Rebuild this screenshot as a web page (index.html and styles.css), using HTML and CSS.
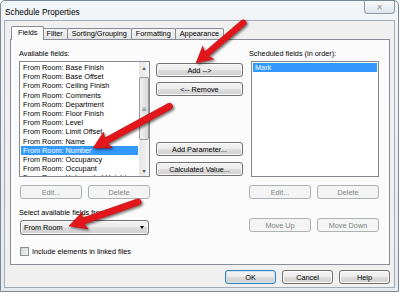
FILE: index.html
```html
<!DOCTYPE html>
<html>
<head>
<meta charset="utf-8">
<title>Schedule Properties</title>
<link rel="stylesheet" href="styles.css">
</head>
<body>
<div class="window">
  <div class="titlebar">
    <span class="title">Schedule Properties</span>
    <div class="close">&#x2715;</div>
  </div>
  <div class="client">
    <div class="tabs">
      <div class="tab active">Fields</div>
      <div class="tab">Filter</div>
      <div class="tab">Sorting/Grouping</div>
      <div class="tab">Formatting</div>
      <div class="tab">Appearance</div>
    </div>
    <div class="panel">
      <!-- left: available fields -->
      <div class="col left">
        <div class="label">Available fields:</div>
        <div class="list">
          <div class="items">
            <div class="item">From Room: Base Finish</div>
            <div class="item">From Room: Base Offset</div>
            <div class="item">From Room: Ceiling Finish</div>
            <div class="item">From Room: Comments</div>
            <div class="item">From Room: Department</div>
            <div class="item">From Room: Floor Finish</div>
            <div class="item">From Room: Level</div>
            <div class="item">From Room: Limit Offset</div>
            <div class="item">From Room: Name</div>
            <div class="item sel">From Room: Number</div>
            <div class="item">From Room: Occupancy</div>
            <div class="item">From Room: Occupant</div>
            <div class="item">From Room: Unbounded Height</div>
          </div>
          <div class="scroll">
            <div class="sb-btn">&#x25B4;</div>
            <div class="thumb">&#x2261;</div>
            <div class="sb-space"></div>
            <div class="sb-btn">&#x25BE;</div>
          </div>
        </div>
        <div class="btnrow">
          <div class="btn off">Edit...</div>
          <div class="btn off">Delete</div>
        </div>
        <div class="label sub">Select available fields from:</div>
        <div class="select">From Room<span class="caret"></span></div>
        <div class="check"><span class="box"></span>Include elements in linked files</div>
      </div>

      <!-- middle: move buttons -->
      <div class="col mid">
        <div class="btn">Add --&gt;</div>
        <div class="btn remove">&lt;-- Remove</div>
        <div class="btn param">Add Parameter...</div>
        <div class="btn calc">Calculated Value...</div>
      </div>

      <!-- right: scheduled fields -->
      <div class="col right">
        <div class="label">Scheduled fields (in order):</div>
        <div class="list wide">
          <div class="items">
            <div class="item sel">Mark</div>
          </div>
        </div>
        <div class="btnrow">
          <div class="btn off">Edit...</div>
          <div class="btn off">Delete</div>
        </div>
        <div class="btnrow moves">
          <div class="btn off">Move Up</div>
          <div class="btn off">Move Down</div>
        </div>
      </div>
    </div>
    <div class="footer">
      <div class="btn default">OK</div>
      <div class="btn">Cancel</div>
      <div class="btn">Help</div>
    </div>
  </div>
</div>

<svg class="arrows" width="400" height="296" viewBox="0 0 400 296">
  <defs>
    <filter id="shadow" x="-20%" y="-20%" width="140%" height="140%">
      <feDropShadow dx="1.5" dy="1.5" stdDeviation="1" flood-color="#000" flood-opacity="0.55"/>
    </filter>
  </defs>
  <g class="arrow" filter="url(#shadow)">
    <path transform="translate(196 63) rotate(139.6)" d="M0 0 L-16 -8.5 L-14 -3 L-62 -3 A3 3 0 0 0 -62 3 L-14 3 L-16 8.5 Z"/>
    <path transform="translate(93 148) rotate(151.4)" d="M0 0 L-17 -9 L-15 -3.2 L-87 -3.2 A3.2 3.2 0 0 0 -87 3.2 L-15 3.2 L-17 9 Z"/>
    <path transform="translate(69 226) rotate(160.8)" d="M0 0 L-17 -9 L-15 -3.2 L-73 -3.2 A3.2 3.2 0 0 0 -73 3.2 L-15 3.2 L-17 9 Z"/>
  </g>
</svg>
</body>
</html>
```

FILE: styles.css
```css
body {
  margin: 0;
  background: #fff;
  font-family: "Liberation Sans", Arial, sans-serif;
  font-size: 7.3px;
  color: #000;
}

/* window frame */
.window {
  width: 399px;
  height: 292px;
  box-sizing: border-box;
  border: 1px solid #7a8896;
  border-radius: 5px 5px 0 0;
  background: linear-gradient(#f2f5f8, #e5eaef);
  display: flex;
  flex-direction: column;
}

.titlebar {
  height: 19px;
  display: flex;
  justify-content: space-between;
  align-items: flex-start;
}

.title {
  font-size: 8.3px;
  padding: 6px 0 0 4px;
}

.close {
  width: 31px;
  height: 13px;
  margin-right: 3px;
  box-sizing: border-box;
  border: 1px solid #8c99a6;
  border-top: none;
  border-radius: 0 0 4px 4px;
  background: linear-gradient(#f6f8fa, #e1e6ec);
  color: #8e99a4;
  font-family: "DejaVu Sans", sans-serif;
  font-size: 8px;
  display: flex;
  align-items: center;
  justify-content: center;
}

.client {
  flex: 1;
  margin: 0 3px 3px 3px;
  border: 1px solid #a3acb5;
  background: #f0f0f0;
  display: flex;
  flex-direction: column;
}

/* tabs */
.tabs {
  display: flex;
  align-items: flex-end;
  height: 13px;
  padding: 5px 0 0 7px;
}

.tab {
  height: 11px;
  box-sizing: border-box;
  border: 1px solid #898c95;
  border-bottom: none;
  border-radius: 2px 2px 0 0;
  background: linear-gradient(#f4f4f4, #e3e3e3);
  padding: 0 4px;
  line-height: 10px;
  margin-left: -1px;
  white-space: nowrap;
}

.tab.active {
  height: 14px;
  background: #fcfcfc;
  padding: 1px 6px 0;
  margin: 0 -2px -1px -1px;
  position: relative;
  z-index: 1;
}

.panel {
  margin: 0 4px 0 5px;
  height: 226px;
  box-sizing: border-box;
  border: 1px solid #898c95;
  background: #fbfbfb;
  display: flex;
  gap: 6px;
  padding: 9px 10px 0 8px;
}

.col {
  display: flex;
  flex-direction: column;
}

.left { width: 131px; }
.mid { width: 87px; padding-top: 14px; }
.right { width: 130px; }

.label {
  height: 12px;
  line-height: 9px;
  white-space: nowrap;
}

.label.sub {
  margin-top: 9px;
}

/* list boxes */
.list {
  height: 116px;
  box-sizing: border-box;
  border: 1px solid #828790;
  background: #fff;
  display: flex;
}

.list.wide {
  width: 128px;
  margin-left: 2px;
}

.items {
  flex: 1;
  padding: 1px 1px 0 1px;
  overflow: hidden;
}

.item {
  height: 9.2px;
  line-height: 9.2px;
  padding-left: 2px;
  white-space: nowrap;
}

.item.sel {
  background: #3399ff;
  color: #fff;
}

.scroll {
  width: 10px;
  display: flex;
  flex-direction: column;
  background: linear-gradient(90deg, #e6e6e6, #f4f4f4);
}

.sb-btn {
  height: 11px;
  font-family: "DejaVu Sans", sans-serif;
  font-size: 6px;
  line-height: 11px;
  text-align: center;
  color: #444;
}

.thumb {
  margin: 4px 0 0 0;
  height: 63px;
  box-sizing: border-box;
  border: 1px solid #9a9a9a;
  border-radius: 2px;
  background: linear-gradient(90deg, #f1f1f1, #d9d9d9);
  font-family: "DejaVu Sans", sans-serif;
  font-size: 6px;
  color: #666;
  display: flex;
  align-items: center;
  justify-content: center;
}

.sb-space { flex: 1; }

/* buttons */
.btn {
  height: 14px;
  box-sizing: border-box;
  border: 1px solid #707070;
  border-radius: 3px;
  background: linear-gradient(#f3f3f3 0%, #ebebeb 49%, #dddddd 50%, #cfcfcf 100%);
  box-shadow: inset 0 0 0 1px #fafafa;
  display: flex;
  align-items: center;
  justify-content: center;
  white-space: nowrap;
}

.btn.off {
  border-color: #adb2b5;
  background: #f4f4f4;
  box-shadow: none;
  color: #838383;
}

.btn.default {
  border-color: #3c7fb1;
  box-shadow: inset 0 0 0 1px #c4e5f6;
}

.mid .remove { margin-top: 5px; }
.mid .param { margin-top: 46px; }
.mid .calc { margin-top: 6px; }

.btnrow {
  display: flex;
  gap: 6px;
  margin-top: 8px;
}

.left .btnrow { padding-left: 1px; }

.btnrow .btn { width: 62px; }

.btnrow.moves { margin-top: 19px; }

.select {
  width: 129px;
  height: 15px;
  margin-left: 1px;
  box-sizing: border-box;
  border: 1px solid #707070;
  border-radius: 3px;
  background: linear-gradient(#f3f3f3 0%, #ebebeb 49%, #dddddd 50%, #cfcfcf 100%);
  box-shadow: inset 0 0 0 1px #fafafa;
  display: flex;
  align-items: center;
  justify-content: space-between;
  padding: 0 4px 0 3px;
}

.caret {
  width: 0;
  height: 0;
  border-left: 2.5px solid transparent;
  border-right: 2.5px solid transparent;
  border-top: 3px solid #000;
}

.check {
  display: flex;
  align-items: center;
  gap: 3px;
  margin: 12px 0 0 1px;
  white-space: nowrap;
}

.box {
  width: 9px;
  height: 9px;
  box-sizing: border-box;
  border: 1px solid #8e8f8f;
  background: linear-gradient(135deg, #d0d4d9, #f7f7f7);
}

.footer {
  display: flex;
  justify-content: flex-end;
  gap: 6px;
  padding: 5px 4px 0 0;
}

.footer .btn { width: 51px; }

/* red callout arrows drawn over the dialog */
.arrows {
  position: absolute;
  top: 0;
  left: 0;
  pointer-events: none;
}

.arrow path {
  fill: #e3191c;
  stroke: #b30d10;
  stroke-width: 0.5;
}
```
